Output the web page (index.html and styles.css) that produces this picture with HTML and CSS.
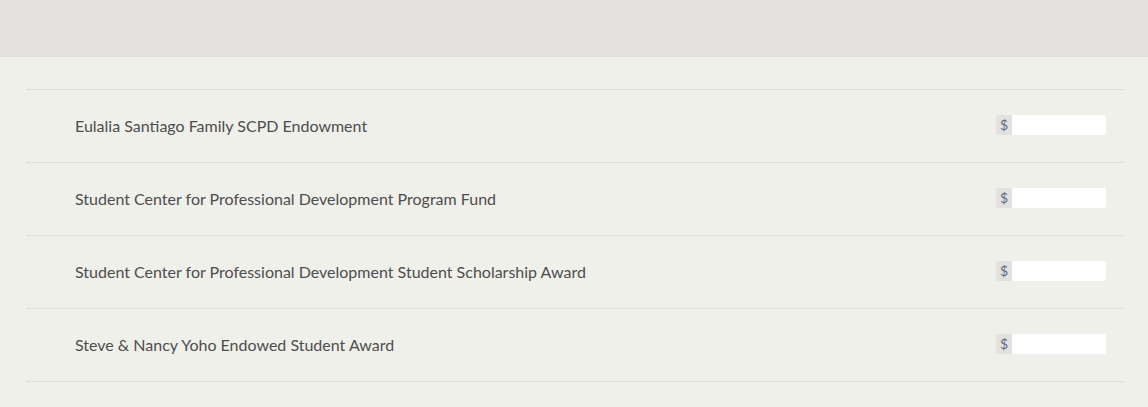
FILE: index.html
```html
<!DOCTYPE html>
<html lang="en">
<head>
  <meta charset="UTF-8" />
  <title>Designations</title>
  <link rel="stylesheet" href="styles.css">
</head>
<body>
  <header class="top-band"></header>

  <section class="funds">
    <div class="fund-row">
      <div class="fund-name">Eulalia Santiago Family SCPD Endowment</div>
      <div class="amount"><span class="addon">$</span><input type="text" class="amount-input"></div>
    </div>
    <div class="fund-row">
      <div class="fund-name">Student Center for Professional Development Program Fund</div>
      <div class="amount"><span class="addon">$</span><input type="text" class="amount-input"></div>
    </div>
    <div class="fund-row">
      <div class="fund-name">Student Center for Professional Development Student Scholarship Award</div>
      <div class="amount"><span class="addon">$</span><input type="text" class="amount-input"></div>
    </div>
    <div class="fund-row last">
      <div class="fund-name">Steve &amp; Nancy Yoho Endowed Student Award</div>
      <div class="amount"><span class="addon">$</span><input type="text" class="amount-input"></div>
    </div>
  </section>
</body>
</html>
```

FILE: styles.css
```css
* { box-sizing: border-box; margin: 0; padding: 0; }

body {
  font-family: Lato, 'Open Sans', sans-serif;
  background-color: #f0f0eb;
  color: #4d4d4d;
}

.top-band {
  height: 57px;
  background-color: #e2e1dd;
}

.funds {
  margin: 32px 25px 0 27px;
}

.fund-row {
  display: flex;
  justify-content: space-between;
  align-items: center;
  height: 73px;
  padding: 0 17px 0 48px;
  border-top: 1px dotted #d3cfc6;
}

.fund-row:first-child {
  border-top-color: #cfcfca;
}

.fund-row.last {
  height: 74px;
  border-bottom: 1px dotted #d3cfc6;
}

.fund-name {
  font-size: 16px;
  padding-bottom: 2px;
}

.amount {
  display: flex;
  height: 20px;
  margin-top: -3px;
}

.addon {
  width: 16px;
  background-color: #e1e1e0;
  color: #5a6b80;
  font-size: 14px;
  line-height: 20px;
  text-align: center;
  border-radius: 3px 0 0 3px;
}

.amount-input {
  width: 94px;
  height: 20px;
  border: none;
  background: white;
  border-radius: 0 3px 3px 0;
  outline: none;
}
```
